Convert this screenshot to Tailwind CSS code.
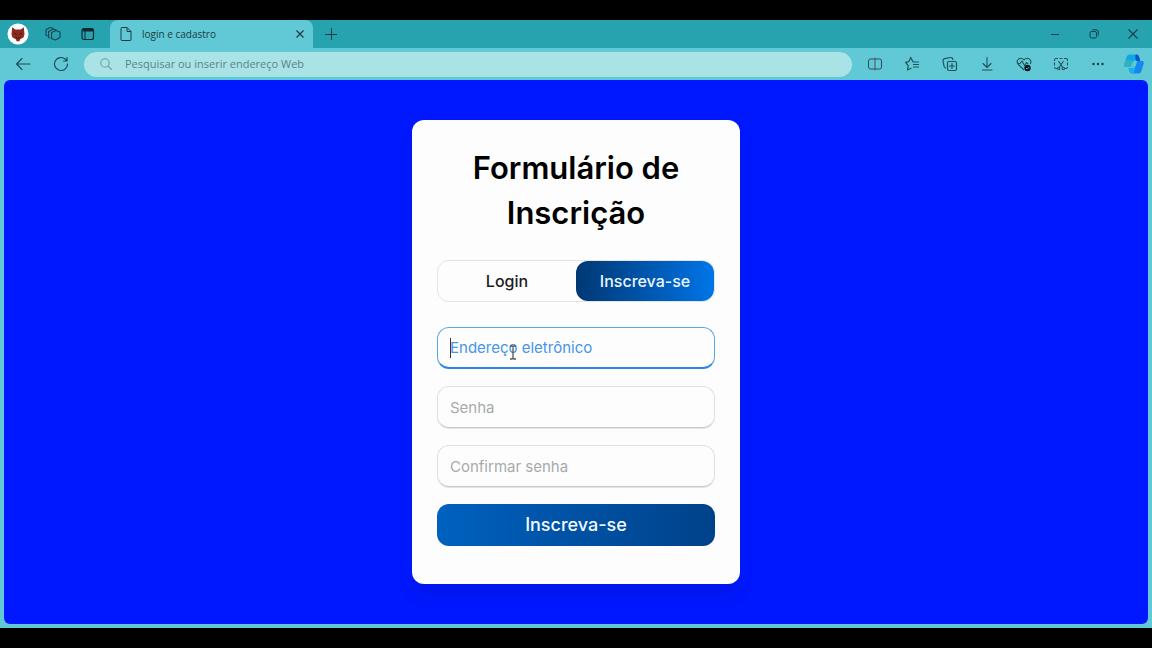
<!DOCTYPE html>
<html lang="pt-BR">
<head>
<meta charset="utf-8">
<meta name="viewport" content="width=device-width, initial-scale=1">
<title>login e cadastro</title>
<script src="https://cdn.jsdelivr.net/npm/@tailwindcss/browser@4"></script>
</head>
<body class="flex min-h-screen flex-col bg-black py-5 font-['Open_Sans',sans-serif] text-[#1d3a42]">
<div class="flex flex-1 flex-col bg-[#60c9d5]">

  <!-- Tab strip -->
  <header class="flex h-7 items-stretch bg-[#27a3b0]">
    <div class="flex w-[110px] items-center">
      <button aria-label="Perfil" class="flex w-9 justify-center">
        <svg class="size-[22px]" viewBox="0 0 22 22"><circle cx="11" cy="11" r="10.5" fill="#fff"/><path d="M5.2 4.2 8.3 6.6h5.4l3.1-2.4.7 7-1 3.200-3.100 1.600-1 2.200H9.600l-1-2.200-3.100-1.600-1-3.200z" fill="#8d2a20"/><path d="m7 10 2.600 1.600M15 10l-2.600 1.600M8.500 14l2.500 1.500 2.500-1.500" stroke="#4b1511" fill="none"/></svg>
      </button>
      <button aria-label="Workspaces" class="flex w-[34px] justify-center">
        <svg class="size-4" viewBox="0 0 16 16" fill="none" stroke="#19454d" stroke-width="1.100" stroke-linejoin="round"><path d="M6.500 6.500 11 4.500l4 1.500v5.500L10.500 14l-4-1.500zM5 12l-1.500-.5v-6L8.500 3l3 1M2.500 10 1 9.500v-6L5.500 1.500l3 1"/></svg>
      </button>
      <button aria-label="Guias verticais" class="flex w-9 justify-center">
        <svg class="size-4" viewBox="0 0 16 16" fill="none" stroke="#102a30" stroke-width="1.200"><rect x="2" y="2.500" width="11.500" height="11" rx="2"/><path d="M2.500 4h10.500" stroke-width="3"/><path d="M5 5v8" stroke-width="1"/></svg>
      </button>
    </div>
    <div class="flex w-[203px] items-center rounded-t-lg bg-[#60c9d5] px-2">
      <svg class="size-4" viewBox="0 0 16 16" fill="none" stroke="#1d3a42" stroke-linejoin="round"><path d="M4 1.500h5l4 4v8q0 1-1 1H4q-1 0-1-1v-11q0-1 1-1zM9 1.500v4h4"/></svg>
      <span class="ml-2 flex-1 text-[10px] leading-4">login e cadastro</span>
      <button aria-label="Fechar guia"><svg class="size-[10px]" viewBox="0 0 10 10" stroke="#1d3a42" stroke-width="1.200"><path d="m1.500 1.500 7 7m0-7-7 7"/></svg></button>
    </div>
    <button aria-label="Nova guia" class="flex w-9 items-center justify-center"><svg class="size-3" viewBox="0 0 12 12" stroke="#163f47"><path d="M0 6.500h12M6.500 0v12"/></svg></button>
    <div class="ml-auto flex">
      <button aria-label="Minimizar" class="flex w-[39px] items-center justify-center"><svg class="size-[10px]" viewBox="0 0 10 10" stroke="#163f47"><path d="M1 5.500h8"/></svg></button>
      <button aria-label="Restaurar" class="flex w-[39px] items-center justify-center"><svg class="size-[10px]" viewBox="0 0 10 10" fill="none" stroke="#163f47"><rect x="1" y="2.500" width="6.500" height="6.500" rx="1.500"/><path d="M3 1.300q.5-.6 1.500-.6h2.500q2.300 0 2.300 2.300v2.500q0 1-.6 1.500"/></svg></button>
      <button aria-label="Fechar" class="flex w-[39px] items-center justify-center"><svg class="size-[10px]" viewBox="0 0 10 10" stroke="#163f47" stroke-width="1.100"><path d="m.5.500 9 9m0-9-9 9"/></svg></button>
    </div>
  </header>

  <!-- Toolbar -->
  <nav aria-label="Navegação" class="flex h-8 items-center">
    <div class="flex w-[84px] items-center pl-1">
      <button aria-label="Voltar" class="flex w-[38px] justify-center"><svg class="size-4" viewBox="0 0 16 16" fill="none" stroke="#1d4b55" stroke-width="1.100" stroke-linecap="round" stroke-linejoin="round"><path d="M15 8H1.500M7 2.500 1.500 8 7 13.500"/></svg></button>
      <button aria-label="Atualizar" class="flex w-[38px] justify-center"><svg class="size-4" viewBox="0 0 16 16" fill="none" stroke="#1d4b55" stroke-width="1.200" stroke-linecap="round" stroke-linejoin="round"><path d="M14.500 8A6.500 6.500 0 1 1 12.600 3.400L14 5M14 1.500V5h-3.500"/></svg></button>
    </div>
    <label class="flex h-[25px] flex-1 items-center rounded-full bg-[#a9e3e6] pl-4">
      <svg class="size-3" viewBox="0 0 12 12" fill="none" stroke="#6e9da4" stroke-width="1.100" stroke-linecap="round"><circle cx="5" cy="5" r="4.200"/><path d="m8.200 8.200 3.300 3.300"/></svg>
      <input type="text" aria-label="Barra de endereços" placeholder="Pesquisar ou inserir endereço Web" class="ml-[13px] flex-1 bg-transparent text-[11px] leading-4 outline-none placeholder:text-[#5c8389]">
    </label>
    <div class="ml-1 flex items-center text-[#21515a]">
      <button aria-label="Dividir tela" class="flex w-[37px] justify-center"><svg class="size-4" viewBox="0 0 16 16" fill="none" stroke="currentColor"><path d="M6.500 3h-3Q1.500 3 1.500 5v6q0 2 2 2h3M9.500 3h3q2 0 2 2v6q0 2-2 2h-3M6.500 3h3M6.500 13h3"/><path d="M8 1.500v13" stroke="#6a4550"/></svg></button>
      <button aria-label="Favoritos" class="flex w-[38px] justify-center"><svg class="size-4" viewBox="0 0 16 16" fill="none" stroke="currentColor" stroke-width="1.200" stroke-linecap="round" stroke-linejoin="round"><path d="M10 6 8.800 5.600 6.800 1.500 4.800 5.700 1.500 6.400l2.700 3.100-.7 4.500L7 12.300M10.500 6h4M9.500 8.500h5M9.500 11h5"/></svg></button>
      <button aria-label="Coleções" class="flex w-[37px] justify-center"><svg class="size-4" viewBox="0 0 16 16" fill="none" stroke="currentColor" stroke-width="1.200" stroke-linecap="round"><rect x="5.500" y="5.500" width="9" height="9" rx="1.500"/><path d="M10 7.500v5M7.500 10h5M3.500 12Q2.300 11.500 2 10L1 5Q.8 3.200 2.500 2.700L8.500 1.500Q10.500 1.300 11 3.500"/></svg></button>
      <button aria-label="Downloads" class="flex w-[37px] justify-center"><svg class="size-4" viewBox="0 0 16 16" fill="none" stroke="currentColor" stroke-width="1.100" stroke-linecap="round" stroke-linejoin="round"><path d="M8 1.500V11M4 7.500l4 4 4-4M3.500 14h9.500"/></svg></button>
      <button aria-label="Integridade do navegador" class="flex w-[37px] justify-center"><svg class="size-4" viewBox="0 0 16 16" fill="none" stroke="currentColor" stroke-width="1.100" stroke-linejoin="round"><path d="m8 14-6-6C-.5 4.500 4 0 8 3.800 12 0 16.500 4.500 14.200 8M1.500 7.500H4L6 5l2.500 4.500 2-3 1.500 1.500"/><circle cx="11.500" cy="12" r="3.200" fill="#06181c" stroke="none"/><path d="m10 12 1.200 1.200 2-2.200" stroke="#60c9d5" stroke-width=".8"/></svg></button>
      <button aria-label="Captura de tela" class="flex w-[37px] justify-center"><svg class="size-4" viewBox="0 0 16 16" fill="none" stroke="currentColor" stroke-width="1.100"><path d="M1.500 5V4q0-1.500 1.500-1.500h2M6.500 2.500h3M11 2.500h2q1.500 0 1.500 1.500v1M1.500 6.500v3M14.500 6.500v3M1.500 11q0 1.500 1.500 1.500h1M14.500 11q0 1.500-1.500 1.500h-1M5.500 5l4 6M10.500 5l-4 6"/><circle cx="5.700" cy="12.500" r="1.200"/><circle cx="10.300" cy="12.500" r="1.200"/></svg></button>
      <button aria-label="Configurações e mais" class="flex w-[37px] justify-center"><svg class="size-4" viewBox="0 0 16 16" fill="#17373e"><circle cx="3.500" cy="8" r="1.200"/><circle cx="8" cy="8" r="1.200"/><circle cx="12.500" cy="8" r="1.200"/></svg></button>
      <button aria-label="Copilot" class="flex w-9 justify-center"><svg class="size-5" viewBox="0 0 20 20"><path d="M5.500.500h7q2 0 2.500 2l1 4h-4.500Q9 6.500 8 9.500l-1 3.500H2Q-.5 13 .3 10.500L2.500 3Q3.300.500 5.500.500z" fill="#12a6e8"/><path d="M1.800 5.500 8.800 7 7 13H2Q-.5 13 .3 10.500z" fill="#2fb4bd"/><path d="M14.500 19.500H8q-2 0-2.500-2l-1-3.500h4q2.500 0 3.300-2.500l1.500-4.500H18q2.500 0 1.700 2.500l-2.200 7.500q-.8 2.500-3 2.500z" fill="#1687f0"/><path d="M11.500.500h1q2 0 2.500 2l1.300 4.500h-3.800q-1.500-1.500-1-6.500z" fill="#0c55c4"/><path d="M4.500 14h4q2 0 3.200-1.500L9.500 19.500H8q-2 0-2.500-2z" fill="#1bb0ee"/></svg></button>
    </div>
  </nav>

  <!-- Page -->
  <main class="mx-1 mb-1 flex flex-1 items-center justify-center rounded-md bg-[#0018ff] font-[Inter,sans-serif]">
    <section class="w-[328px] rounded-xl bg-[#fdfdfd] px-[25px] pt-[25px] pb-[38px] shadow-[0_12px_16px_rgba(0,0,0,0.08)]">
      <h1 class="text-center text-[31px] leading-[45px] font-semibold text-black">Formulário de Inscrição</h1>
      <div class="mt-[25px] flex h-[42px] rounded-xl border border-[#e4e4e4] text-base font-medium">
        <button class="flex-1 text-[#1c1c1c]">Login</button>
        <button class="flex-1 rounded-xl bg-linear-to-r from-[#003874] via-[#0055ac] to-[#0075e8] text-[#eaf6ff]">Inscreva-se</button>
      </div>
      <form class="mt-[25px] flex flex-col gap-[17px] text-[15px]">
        <div class="relative flex">
          <input type="email" aria-label="Endereço eletrônico" placeholder="Endereço eletrônico" class="h-[42px] w-full rounded-xl border border-b-2 border-[#5aa9e6] border-b-[#2c84ea] px-3 outline-none placeholder:text-[#4794e8]">
          <span class="absolute top-[11px] left-[13px] h-5 w-px bg-[#333]"></span>
          <svg class="absolute top-[18px] left-[72px] h-[15px] w-2" viewBox="0 0 8 15" fill="none" stroke="#555" stroke-width="1.300"><path d="M1 1h2l1 1 1-1h2M4 1.500v12M1 14h2l1-1 1 1h2"/></svg>
        </div>
        <input type="password" aria-label="Senha" placeholder="Senha" class="h-[42px] w-full rounded-xl border border-[#dfe1e1] border-b-[#c6caca] px-3 shadow-[0_1px_0_#e3e5e5] outline-none placeholder:text-[#a8abab]">
        <input type="password" aria-label="Confirmar senha" placeholder="Confirmar senha" class="h-[42px] w-full rounded-xl border border-[#dfe1e1] border-b-[#c6caca] px-3 shadow-[0_1px_0_#e3e5e5] outline-none placeholder:text-[#a8abab]">
        <button type="button" class="h-[42px] rounded-xl bg-linear-to-r from-[#0061bf] to-[#00428a] text-lg font-medium text-[#f3faff]">Inscreva-se</button>
      </form>
    </section>
  </main>
</div>
</body>
</html>
